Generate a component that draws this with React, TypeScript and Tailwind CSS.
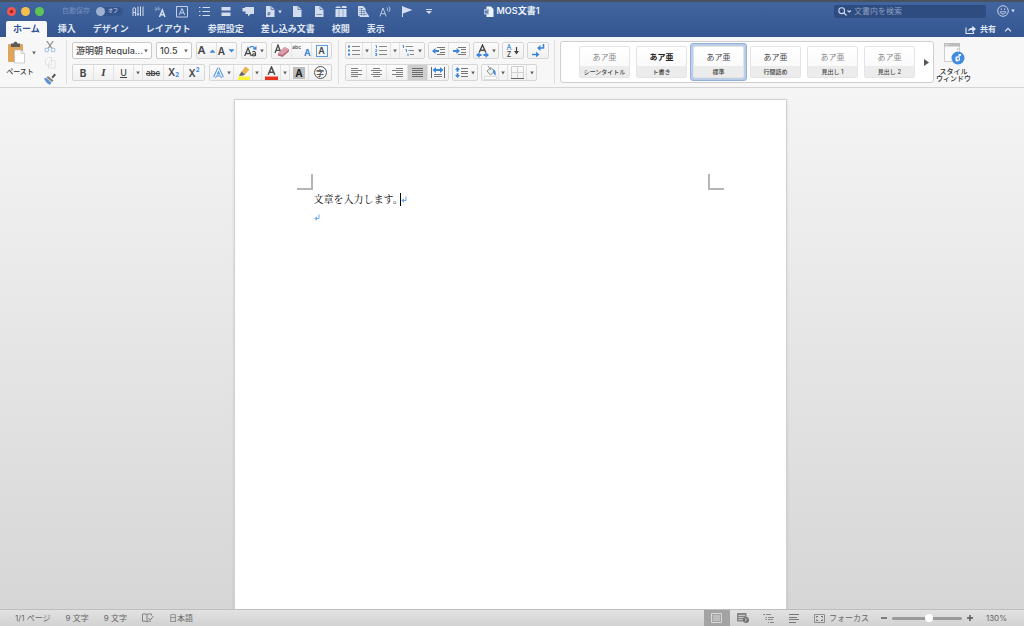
import { ReactNode } from "react";
import clsx from "clsx";

const BLUE = "#3b86d8";
const INK = "#4a4a4a";

function Icon({ w, h, label, children }: { w: number; h: number; label?: string; children: ReactNode }) {
  return (
    <svg width={w} height={h} viewBox={`0 0 ${w} ${h}`} fill="none" className="shrink-0" aria-hidden={!label} aria-label={label}>
      {children}
    </svg>
  );
}

function Caret({ className = "text-[#606060]" }: { className?: string }) {
  return (
    <svg width="4" height="4" viewBox="0 0 4 4" className={clsx("shrink-0", className)} aria-hidden>
      <path d="M.2.5h3.600L2 3.500z" fill="currentColor" />
    </svg>
  );
}

/* ---------- title bar icons ---------- */

const quickIcons: { label: string; icon: ReactNode; caret?: boolean }[] = [
  {
    label: "縦書き",
    icon: <path d="M1 11V4a1.3 1.3 0 0 1 2.6 0v7M1 7.5h2.600M6 1.500v8M8.500 1.500v9.500M11 1.500v9.500M4.900 8.500L6 10.500l1.100-2" stroke="currentColor" strokeWidth="1" />,
  },
  {
    label: "文字種の変換",
    icon: (
      <>
        <path d="M.8 3c1-.8 2-.3 2 .6v1.600M2.800 4C.3 3.800.3 5.500 1.600 5.300 2.300 5.200 2.800 4.700 2.800 4M4.200 1v4.200M4.200 3.500c1-1.300 2.300-.2 1.600 1-.4.8-1.200.8-1.600.3" stroke="currentColor" strokeWidth=".6" opacity=".7" />
        <path d="M5.500 12l2.800-7 2.700 7M6.500 9.800h3.600" stroke="currentColor" strokeWidth="1.500" />
      </>
    ),
  },
  {
    label: "囲み線",
    icon: (
      <>
        <path d="M.5 1.500h11v10.500H.5z" stroke="currentColor" strokeWidth=".9" />
        <path d="M3.300 10L6 3.500 8.700 10M4.200 7.900h3.600" stroke="currentColor" strokeWidth=".9" />
      </>
    ),
  },
  {
    label: "箇条書き",
    icon: <path d="M1 2.500h1.500M1 6.500h1.500M1 10.500h1.500M4.500 2.500H12M4.500 6.500H12M4.500 10.500H12" stroke="currentColor" strokeWidth="1" />,
  },
  {
    label: "区切り",
    icon: <path d="M1.500 2h9v3.500h-9zM1.500 7.500h9V11h-9z" fill="currentColor" />,
  },
  {
    label: "コメント",
    icon: <path d="M3 2h9v7H8.500L6 11.500V9H3.500V6.500H.5V3H3z" fill="currentColor" />,
  },
  {
    label: "新規文書",
    caret: true,
    icon: (
      <>
        <path d="M2 1h5l3.500 3.500V12H2z" fill="currentColor" />
        <path d="M7 1v3.500h3.500" stroke="#3d61a0" strokeWidth=".7" />
        <path d="M3.500 8h3M3.500 9.700h2.500M4.300 7v3.500M5.700 7v3" stroke="#3d61a0" strokeWidth=".6" />
      </>
    ),
  },
  {
    label: "空白の文書",
    icon: (
      <>
        <path d="M2 1h5l3.500 3.500V12H2z" fill="currentColor" />
        <path d="M7 1v3.500h3.500" stroke="#3d61a0" strokeWidth=".7" />
      </>
    ),
  },
  {
    label: "ページ",
    icon: (
      <>
        <path d="M2 1h5l3.500 3.500V12H2z" fill="currentColor" />
        <path d="M7 1v3.500h3.500M3.500 9.500h5.500" stroke="#3d61a0" strokeWidth=".6" />
      </>
    ),
  },
  {
    label: "テンプレート",
    icon: (
      <>
        <path d="M.5 4h11v8H.5zM0 3l1.500-1.500H5L6 3zM6.500 3l.5-2h4l1 2z" fill="currentColor" />
        <path d="M4 4v8M8 4v8" stroke="#3d61a0" strokeWidth=".4" />
      </>
    ),
  },
  {
    label: "相互参照",
    icon: (
      <>
        <path d="M1 1h5l2.500 2.500V6L12 11v1H3.500L1 10.500z" fill="currentColor" />
        <path d="M2.200 3.500h4M2.200 5.500h5.500M2.200 7.500h6M2.200 9.500H10M4.500 3v7.500M7 5.500v5.500" stroke="#3d61a0" strokeWidth=".5" />
      </>
    ),
  },
  {
    label: "読み上げ",
    icon: <path d="M.8 11.500l3.200-8.500 3.200 8.500M2 8.700h4M8 2.500c.8 1 .8 2.500 0 3.500M9.800 1.500c1.500 1.500 1.500 4 0 5.500" stroke="currentColor" strokeWidth=".8" />,
  },
  {
    label: "フラグ",
    icon: (
      <>
        <path d="M1.500 1v11" stroke="currentColor" strokeWidth="1" />
        <path d="M2 1.500l9.500 3.500L2 8.500z" fill="currentColor" />
      </>
    ),
  },
  {
    label: "カスタマイズ",
    icon: (
      <>
        <path d="M3 4.500h6" stroke="currentColor" strokeWidth="1" />
        <path d="M3 6h6L6 9z" fill="currentColor" />
      </>
    ),
  },
];

function TitleBar() {
  return (
    <div className="flex h-[18px] items-center">
      <div className="flex flex-1 items-center">
        <div className="flex gap-[5px] pl-[7px]">
          <button aria-label="閉じる" className="flex size-[9px] items-center justify-center rounded-full bg-[#f0554d]">
            <span className="size-[3px] rounded-full bg-[#8c1a12]" />
          </button>
          <button aria-label="しまう" className="size-[9px] rounded-full bg-[#f5bd4b]" />
          <button aria-label="拡大" className="size-[9px] rounded-full bg-[#5fc454]" />
        </div>
        <label className="ml-[18px] flex items-center gap-[6px] text-[7px] font-medium text-[#6e88b8]">
          自動保存
          <span className="relative flex h-[9px] w-[27px] items-center rounded-full bg-[#34548c]">
            <input type="checkbox" role="switch" className="absolute inset-0 size-full appearance-none" />
            <span className="size-[9px] rounded-full bg-[#9fb1d0]" />
            <span className="pl-[3px] text-[5px] font-bold text-[#9fb1d0]">オフ</span>
          </span>
        </label>
        <div className="ml-[9px] flex items-center gap-[10px] text-[#d3ddee]">
          {quickIcons.map((q) => (
            <button key={q.label} aria-label={q.label} className={clsx("relative", q.caret && "mr-[5px]")}>
              <Icon w={12} h={13}>
                {q.icon}
              </Icon>
              {q.caret && (
                <span className="absolute top-[5px] left-[14px]">
                  <Caret className="text-[#d3ddee]" />
                </span>
              )}
            </button>
          ))}
        </div>
      </div>
      <h1 className="flex items-center gap-[3px] pl-2 text-[9px] font-semibold text-[#eef2f9]">
        <Icon w={10} h={11}>
          <path d="M2.500.5h4.500L9.500 3v8h-7z" fill="#eef2f9" />
          <path d="M0 3h5v5.500H0z" fill="#aebfdd" />
          <path d="M1 4.200l.8 3 .7-2.500.8 2.500.7-3" stroke="#3d61a0" strokeWidth=".6" />
        </Icon>
        MOS文書1
      </h1>
      <div className="flex flex-1 items-center justify-end pr-[9px]">
        <label className="mr-[11px] flex h-[13px] w-[152px] items-center rounded-[2px] bg-[#2f4c80] pl-1">
          <Icon w={14} h={9} label="検索">
            <circle cx="3.700" cy="3.700" r="2.900" stroke="#d3ddee" strokeWidth="1.100" />
            <path d="M5.900 5.900l2.600 2.600M9.500 3.500L11.200 5l1.700-1.500" stroke="#d3ddee" strokeWidth="1.200" />
          </Icon>
          <input
            type="search"
            aria-label="文書内を検索"
            placeholder="文書内を検索"
            className="ml-[2px] min-w-0 flex-1 bg-transparent text-[8px] outline-none placeholder:text-[#8c9fc3]"
          />
        </label>
        <button aria-label="フィードバック" className="flex items-center gap-[2px]">
          <Icon w={12} h={12}>
            <circle cx="6" cy="6" r="5.300" stroke="#d3ddee" strokeWidth=".9" />
            <path d="M3 6.800c.6 3 5.400 3 6 0z" stroke="#d3ddee" strokeWidth=".8" />
            <path d="M4.300 3.500v1.500M7.700 3.500v1.500" stroke="#d3ddee" strokeWidth="1" />
          </Icon>
          <Caret className="text-[#d3ddee]" />
        </button>
      </div>
    </div>
  );
}

const tabs = ["挿入", "デザイン", "レイアウト", "参照設定", "差し込み文書", "校閲", "表示"];

function TabBar() {
  return (
    <div className="mt-px flex h-4 items-center justify-between pr-3 pl-[6px] text-[9px] font-semibold">
      <nav className="flex h-full items-center gap-[17px] text-[#dfe7f3]">
        <button className="-mr-[6px] h-full rounded-t-[2px] bg-[#f8f8f8] px-[7px] text-[#2f5496]">ホーム</button>
        {tabs.map((tab) => (
          <button key={tab}>{tab}</button>
        ))}
      </nav>
      <div className="flex items-center gap-[8px] text-[8px] text-[#dfe7f3]">
        <button className="flex items-center gap-[4px]">
          <Icon w={11} h={9}>
            <path d="M1 2.500v6h7.500v-2" stroke="currentColor" strokeWidth="1.100" />
            <path d="M3 6.500c.3-2.500 2-3.700 4.300-3.700V.8L11 4 7.300 7V5C5.300 5 4 5.300 3 6.500z" fill="currentColor" />
          </Icon>
          共有
        </button>
        <button aria-label="リボンを折りたたむ">
          <Icon w={8} h={5}>
            <path d="M1 4.300l3-3 3 3" stroke="currentColor" strokeWidth="1.200" />
          </Icon>
        </button>
      </div>
    </div>
  );
}

/* ---------- ribbon ---------- */

function Group({ children }: { children: ReactNode }) {
  return (
    <div className="flex h-[17px] divide-x divide-[#e2e2e2] rounded-[2px] border border-[#d6d6d6] bg-gradient-to-b from-[#fbfbfb] to-[#f1f1f1]">
      {children}
    </div>
  );
}

function Tool({ label, className = "w-5", active, children }: { label: string; className?: string; active?: boolean; children: ReactNode }) {
  return (
    <button
      aria-label={label}
      className={clsx("flex h-full shrink-0 items-center justify-center gap-[3px] text-[10px] leading-none text-[#444]", active && "bg-[#cfcfcf]", className)}
    >
      {children}
    </button>
  );
}

function DropCell({ label }: { label: string }) {
  return (
    <Tool label={label} className="w-[9px]">
      <Caret />
    </Tool>
  );
}

function Select({ label, value, className }: { label: string; value: string; className: string }) {
  return (
    <label className={clsx("relative flex h-[17px] items-center rounded-[2px] border border-[#c9c9c9] bg-white", className)}>
      <select aria-label={label} className="w-full appearance-none pl-[3px] text-[9px] leading-none font-medium text-[#444] outline-none">
        <option>{value}</option>
      </select>
      <span className="pointer-events-none absolute right-[3px]">
        <Caret />
      </span>
    </label>
  );
}

function Separator() {
  return <div className="my-[3px] w-px bg-[#dedede]" />;
}

function Clipboard() {
  return (
    <div className="flex w-[66px] pt-[4px]">
      <button className="flex w-[40px] flex-col items-center text-[7px] font-medium text-[#333]">
        <span className="flex items-center gap-[5px] pl-[3px]">
          <Icon w={20} h={23}>
            <rect x="1" y="3" width="15" height="18" rx="1" fill="#dfa65b" />
            <path d="M4 2.500h2.500C7 0 10 0 10.500 2.500H13V6H4z" fill="#5b5b5b" />
            <path d="M7.500 9h6.500l3.500 3.500V22h-10z" fill="#fff" stroke="#bbb" strokeWidth=".7" />
            <path d="M14 9v3.500h3.500" stroke="#bbb" strokeWidth=".7" />
          </Icon>
          <Caret />
        </span>
        <span className="mt-[3px]">ペースト</span>
      </button>
      <div className="flex flex-col gap-[4px] pl-[4px]">
        <button aria-label="切り取り">
          <Icon w={12} h={12}>
            <path d="M2.800 0L8 7.500M9.200 0L4 7.500" stroke="#8a8a8a" strokeWidth="1.200" />
            <circle cx="2.800" cy="9" r="1.900" stroke="#a9c5e8" strokeWidth="1.100" />
            <circle cx="9.200" cy="9" r="1.900" stroke="#a9c5e8" strokeWidth="1.100" />
          </Icon>
        </button>
        <button aria-label="コピー">
          <Icon w={12} h={12}>
            <path d="M1.500 3l2.500-2.500h3.500V8h-6zM4.500 6L7 3.500h4V11H4.500z" fill="#f8f8f8" stroke="#dcdcdc" strokeWidth=".8" />
          </Icon>
        </button>
        <button aria-label="書式のコピー">
          <Icon w={12} h={12}>
            <path d="M7.500 4L10.500.5 12 2 8.800 5.500z" fill="#555" />
            <path d="M4 3l5.500 4.500-1.500 1.500-5.500-4.500z" fill="#808080" />
            <path d="M0 5.500l2-.7L7.500 9.500 6 11.800C3.500 11 1.500 9 0 5.500z" fill="#5f93cf" />
          </Icon>
        </button>
      </div>
    </div>
  );
}

function FontTools() {
  return (
    <div className="flex flex-col gap-[5px] pt-[5px] pr-[6px] pl-[5px]">
      <div className="flex gap-1">
        <Select label="フォント" value="游明朝 Regula..." className="w-[80px]" />
        <Select label="フォントサイズ" value="10.5" className="w-[36px]" />
        <Group>
          <Tool label="フォントの拡大" className="w-[20px] gap-0 text-[11px] font-semibold">
            A
            <Icon w={7} h={4}>
              <path d="M.5 3.800h6L3.500.5z" fill={BLUE} />
            </Icon>
          </Tool>
          <Tool label="フォントの縮小" className="w-[19px] gap-0 font-semibold">
            A
            <Icon w={7} h={4}>
              <path d="M.5.300h6L3.500 3.600z" fill={BLUE} />
            </Icon>
          </Tool>
        </Group>
        <Group>
          <Tool label="文字種の変換" className="w-[24px]">
            <Icon w={13} h={12}>
              <path d="M.7 11L4 3l3.300 8M1.800 8.500h4.400" stroke={INK} strokeWidth="1.300" />
              <path d="M8.500 7c1-1 3-.7 3 .8V11M11.500 8.600c-4 0-4 2.300-1.700 2.300 1 0 1.700-.7 1.700-1.400" stroke={INK} strokeWidth="1.100" />
              <path d="M5.500 3C7 .8 9 .8 10.500 2.800" stroke={BLUE} strokeWidth="1.300" />
              <path d="M12.500 1v4L8.500 4z" fill={BLUE} />
            </Icon>
            <Caret />
          </Tool>
        </Group>
        <Group>
          <Tool label="書式のクリア">
            <Icon w={16} h={14}>
              <path d="M1 9l3-8 3 8M2.100 6.300h3.800" stroke={INK} strokeWidth="1.300" />
              <path d="M4 9.500L10.500 3l4.500 2.500V7.500L8.500 13 4 11.500z" fill="#b9687c" />
              <path d="M4 9.500L10.500 3 15 5.500l-6.500 5.500z" fill="#dc9dab" />
            </Icon>
          </Tool>
          <Tool label="ルビ" className="w-5 gap-0">
            <span className="self-start pt-px text-[5px] leading-[6px] font-medium">abc</span>
            <span className="self-end text-[9px] leading-[10px] font-bold text-[#3b86d8]">A</span>
          </Tool>
          <Tool label="囲み線" className="w-[19px]">
            <span className="flex size-3 items-center justify-center border border-[#5b9be0] text-[9px] font-semibold">A</span>
          </Tool>
        </Group>
      </div>
      <div className="flex gap-1">
        <Group>
          <Tool label="太字" className="w-[21px] font-bold">B</Tool>
          <Tool label="斜体" className="w-5 font-['Liberation_Serif'] text-[11px] font-bold italic">I</Tool>
          <Tool label="下線" className="w-5">
            <span className="border-b border-[#444] text-[9px] leading-[9px] font-medium">U</span>
          </Tool>
          <DropCell label="下線の種類" />
          <Tool label="取り消し線" className="w-[21px]">
            <span className="text-[8px] font-semibold line-through">abc</span>
          </Tool>
          <Tool label="下付き">
            <span className="pb-px font-semibold">X</span>
            <span className="-ml-[3px] self-end pb-[2px] text-[6px] font-bold text-[#3b86d8]">2</span>
          </Tool>
          <Tool label="上付き">
            <span className="pt-px font-semibold">X</span>
            <span className="-ml-[3px] self-start pt-[2px] text-[6px] font-bold text-[#3b86d8]">2</span>
          </Tool>
        </Group>
        <Group>
          <Tool label="文字の効果" className="w-6">
            <Icon w={11} h={12}>
              <path d="M1.500 10.500L5.500 2l4 8.500M3.200 8h4.600" stroke="#4a90dc" strokeWidth="3" strokeLinejoin="round" />
              <path d="M1.500 10.700L5.500 2l4 8.700M3.200 8h4.600" stroke="#f2f8ff" strokeWidth="1.200" />
            </Icon>
            <Caret />
          </Tool>
          <Tool label="蛍光ペン" className="w-[19px]">
            <Icon w={13} h={14}>
              <path d="M1 10.500h12V14H1z" fill="#fbf335" />
              <path d="M4.500 5.500L8.500.5l4 3L8 8.500z" fill="#e9b54c" />
              <path d="M4.500 5.500L8 8.500l-2.500 1.200H2z" fill="#666" />
            </Icon>
          </Tool>
          <DropCell label="蛍光ペンの色" />
          <Tool label="フォントの色" className="w-[19px]">
            <Icon w={13} h={14}>
              <path d="M3.200 8.800L6.500 1l3.300 7.800M4.400 6.300h4.200" stroke={INK} strokeWidth="1.500" />
              <path d="M0 10.500h13V14H0z" fill="#e8321f" />
            </Icon>
          </Tool>
          <DropCell label="フォントの色を選択" />
          <Tool label="文字の網かけ" className="w-[19px]">
            <span className="flex size-3 items-center justify-center bg-[#bdbdbd] font-bold text-[#222]">A</span>
          </Tool>
          <Tool label="囲い文字" className="w-[22px]">
            <span className="flex size-[13px] items-center justify-center rounded-full border border-[#555] text-[8px] font-medium">字</span>
          </Tool>
        </Group>
      </div>
    </div>
  );
}

function IndentIcon({ out }: { out?: boolean }) {
  return (
    <Icon w={13} h={10}>
      <path d="M5 1.500h8M8 3.500h5M8 6.500h5M5 8.500h8" stroke="#777" strokeWidth="1" />
      <path d={out ? "M0 5l3.500-3v2H7v2H3.500v2z" : "M7 5L3.500 2v2H0v2h3.500v2z"} fill={BLUE} />
    </Icon>
  );
}

function ParagraphTools() {
  return (
    <div className="flex flex-col gap-[5px] pt-[5px] pr-[5px] pl-[6px]">
      <div className="flex gap-[3px]">
        <Group>
          <Tool label="箇条書き" className="w-[17px]">
            <Icon w={12} h={11}>
              <path d="M0 1.500h2M0 5.500h2M0 9.500h2" stroke={BLUE} strokeWidth="2" />
              <path d="M4 1.500h8M4 5.500h8M4 9.500h8" stroke="#888" strokeWidth="1" />
            </Icon>
          </Tool>
          <DropCell label="行頭文字" />
          <Tool label="段落番号" className="w-[19px]">
            <Icon w={12} h={11}>
              <path d="M.5.500h1V3M.3 4.500h1.300v1L.5 6.700h1.500M.3 8.500h1.400v2H.3M.7 9.500h1" stroke={BLUE} strokeWidth=".9" />
              <path d="M4 1.500h8M4 5.500h8M4 9.500h8" stroke="#888" strokeWidth="1" />
            </Icon>
          </Tool>
          <DropCell label="番号書式" />
          <Tool label="アウトライン" className="w-[24px]">
            <Icon w={13} h={11}>
              <path d="M.5.500h1V3M3.500 4.500h1v2.500M6 8.500v2.500" stroke={BLUE} strokeWidth="1" />
              <path d="M3.500 1.500H11M6.500 5.500H12M8 9.500h4" stroke="#888" strokeWidth="1" />
            </Icon>
            <Caret />
          </Tool>
        </Group>
        <Group>
          <Tool label="インデントを減らす">
            <IndentIcon out />
          </Tool>
          <Tool label="インデントを増やす">
            <IndentIcon />
          </Tool>
        </Group>
        <Group>
          <Tool label="拡張書式" className="w-6">
            <Icon w={13} h={14}>
              <path d="M3.200 8.500L6.500 1l3.300 7.500M4.400 6.200h4.200" stroke={INK} strokeWidth="1.400" />
              <path d="M0 11l3.500-3v2h2v2h-2v2zM13 11L9.500 8v2h-2v2h2v2z" fill={BLUE} />
            </Icon>
            <Caret />
          </Tool>
        </Group>
        <Group>
          <Tool label="並べ替え">
            <span className="flex flex-col text-[7px] leading-[7px] font-medium">
              <span className="text-[#3b86d8]">A</span>
              <span>Z</span>
            </span>
            <Icon w={5} h={8}>
              <path d="M2.500 0v6" stroke="#444" strokeWidth="1.200" />
              <path d="M0 4h5L2.500 7.500z" fill="#444" />
            </Icon>
          </Tool>
        </Group>
        <Group>
          <Tool label="編集記号">
            <Icon w={13} h={13}>
              <path d="M11.500 0v4H8M0 10.500h5" stroke={BLUE} strokeWidth="1.600" />
              <path d="M8.500 1v6L5 4zM4 7.500v6l3.500-3z" fill={BLUE} />
            </Icon>
          </Tool>
        </Group>
      </div>
      <div className="flex gap-[3px]">
        <Group>
          <Tool label="左揃え" className="w-[21px]">
            <Icon w={11} h={9}>
              <path d="M0 .5h7M0 2.500h11M0 4.500h7M0 6.500h11M0 8.500h7" stroke="#808080" strokeWidth="1" />
            </Icon>
          </Tool>
          <Tool label="中央揃え">
            <Icon w={11} h={9}>
              <path d="M2 .5h7M0 2.500h11M2 4.500h7M0 6.500h11M2 8.500h7" stroke="#808080" strokeWidth="1" />
            </Icon>
          </Tool>
          <Tool label="右揃え" className="w-[21px]">
            <Icon w={11} h={9}>
              <path d="M4 .5h7M0 2.500h11M4 4.500h7M0 6.500h11M4 8.500h7" stroke="#808080" strokeWidth="1" />
            </Icon>
          </Tool>
          <Tool label="両端揃え" active>
            <Icon w={11} h={9}>
              <path d="M0 .5h11M0 2.500h11M0 4.500h11M0 6.500h11M0 8.500h11" stroke="#6a6a6a" strokeWidth="1" />
            </Icon>
          </Tool>
          <Tool label="均等割り付け">
            <Icon w={14} h={11}>
              <path d="M.5 0v11M13.500 0v11" stroke="#666" strokeWidth="1" />
              <path d="M1.500 3L5 0v2h4V0l3.500 3L9 6V4H5v2z" fill={BLUE} />
              <path d="M3 7.500h8M3 9.500h8" stroke="#777" strokeWidth="1" />
            </Icon>
          </Tool>
        </Group>
        <Group>
          <Tool label="行間" className="w-6">
            <Icon w={13} h={11}>
              <path d="M2.500 0L5 3H3.500v1.800h-2V3H0zM2.500 11L5 8H3.500V6.200h-2V8H0z" fill={BLUE} />
              <path d="M6 1.500h7M6 4.500h7M6 6.500h7M6 9.500h7" stroke="#777" strokeWidth="1" />
            </Icon>
            <Caret />
          </Tool>
        </Group>
        <Group>
          <Tool label="塗りつぶし" className="w-[17px]">
            <Icon w={13} h={14}>
              <path d="M3 5l4-3.500 3.500 4L6.500 9z" fill="#eee" stroke="#777" strokeWidth=".8" />
              <path d="M4 0l3 4" stroke="#777" strokeWidth=".8" />
              <path d="M9 3.500c2.500 0 3 3 2.500 6-1.500-1-2.500-2.500-2.500-6z" fill={BLUE} />
              <path d="M.5 10.500h12v3H.5z" fill="#fff" stroke="#ccc" strokeWidth=".6" />
            </Icon>
          </Tool>
          <DropCell label="塗りつぶしの色" />
          <Tool label="罫線" className="w-[19px]">
            <Icon w={13} h={13}>
              <path d="M.5 12V.5h12V12M6.500.5V12M.5 6.500h12" stroke="#d0d0d0" strokeWidth="1" />
              <path d="M0 12.500h13" stroke="#666" strokeWidth="1" />
            </Icon>
          </Tool>
          <DropCell label="罫線の種類" />
        </Group>
      </div>
    </div>
  );
}

const styles = [
  { name: "シーンタイトル", sample: "text-[#888]" },
  { name: "ト書き", sample: "text-[#222] font-bold" },
  { name: "標準", sample: "text-[#444]", selected: true },
  { name: "行間詰め", sample: "text-[#444]" },
  { name: "見出し 1", sample: "text-[#888]" },
  { name: "見出し 2", sample: "text-[#888]" },
];

function StyleGallery() {
  return (
    <div className="mt-1 ml-[5px] flex h-[42px] items-center rounded-[3px] border border-[#cfcfcf] bg-white pr-[4px] pl-[15px]">
      {styles.map((style) => (
        <button
          key={style.name}
          className={clsx("h-[38px] w-[57px] rounded-[3px] border p-[2px]", style.selected ? "border-[#93afdb] bg-[#bccde8]" : "border-transparent")}
        >
          <span className="flex h-full flex-col overflow-hidden rounded-[2px] border border-[#e4e4e4] bg-gradient-to-b from-white to-[#f7f7f7]">
            <span className={clsx("flex flex-1 items-center justify-center text-[8px] leading-none", style.sample)}>あア亜</span>
            <span className="bg-[#ececec] text-center text-[6px] leading-[11px] font-medium whitespace-nowrap text-[#444]">{style.name}</span>
          </span>
        </button>
      ))}
      <button aria-label="その他のスタイル" className="ml-[6px]">
        <Icon w={5} h={7}>
          <path d="M0 0v7l5-3.500z" fill="#555" />
        </Icon>
      </button>
    </div>
  );
}

function StylePaneButton() {
  return (
    <button className="ml-[2px] flex flex-col items-center pt-[6px] text-[7px] leading-[7px] font-medium text-[#333]">
      <Icon w={22} h={22}>
        <path d="M1.500.5h15v18h-15z" fill="#fbfbfb" stroke="#c4c4c4" strokeWidth=".8" />
        <path d="M1 0h16v3.500H1z" fill="#bcbcbc" />
        <path d="M2.500 1.800h1M4.500 1.800h1" stroke="#fff" strokeWidth="1" />
        <path d="M14 6h1.500" stroke="#999" strokeWidth="1" />
        <circle cx="15" cy="15" r="6.500" fill="#3f8ce0" />
        <path d="M15.500 11h2.500v1.800h-1.300v2h-1.200zM13 13.500h3v1.300h-1.500c-.8 0-.8 1.700 0 1.700h1.500V15h1v2.500h-1.500c-.3 1.500-2.800 1.300-3-.3-.1-1.200-.3-3 .5-3.700z" fill="#fff" />
      </Icon>
      <span className="mt-[3px]">スタイル</span>
      <span>ウィンドウ</span>
    </button>
  );
}

function Ribbon() {
  return (
    <div className="flex h-[51px] shrink-0 items-stretch border-b border-[#d5d5d5] bg-[#f7f7f7]">
      <Clipboard />
      <Separator />
      <FontTools />
      <Separator />
      <ParagraphTools />
      <Separator />
      <div className="flex items-start">
        <StyleGallery />
        <StylePaneButton />
      </div>
    </div>
  );
}

/* ---------- document ---------- */

function ReturnMark() {
  return (
    <Icon w={6} h={7}>
      <path d="M5 .5v4H2.500" stroke="#6aaaf0" strokeWidth="1" />
      <path d="M3 2.300v4.400L.3 4.500z" fill="#6aaaf0" />
    </Icon>
  );
}

function Document() {
  return (
    <main className="min-h-0 flex-1 overflow-hidden bg-gradient-to-b from-[#f5f5f5] to-[#d6d6d6] pt-[11px] pr-1">
      <article className="mx-auto h-full w-[553px] border border-b-0 border-[#d0d0d0] bg-white px-[62px] pt-[74px] shadow-sm">
        <div className="flex justify-between">
          <span className="size-4 border-r-2 border-b-2 border-[#b5b5b5]" />
          <span className="size-4 border-b-2 border-l-2 border-[#b5b5b5]" />
        </div>
        <div className="px-[17px] font-['Noto_Serif_CJK_JP','Noto_Sans_CJK_JP',serif] text-[10px] leading-[18px] text-black">
          <p className="flex items-center">
            文章を入力します。
            <span className="-ml-[3px] h-[13px] w-px bg-black" />
            <ReturnMark />
          </p>
          <p className="flex h-[18px] items-center">
            <ReturnMark />
          </p>
        </div>
      </article>
    </main>
  );
}

/* ---------- status bar ---------- */

function StatusBar() {
  return (
    <footer className="flex h-[17px] shrink-0 items-center justify-between border-t border-[#bdbdbd] bg-gradient-to-b from-[#e2e2e2] to-[#d2d2d2] text-[8px] text-[#666]">
      <div className="flex items-center gap-[15px] pl-[15px]">
        <span>1/1 ページ</span>
        <span>9 文字</span>
        <span>9 文字</span>
        <button aria-label="文章校正">
          <Icon w={12} h={10}>
            <path d="M5 8.500V1.500C4 .8 2 .8.500 1v7.300c1.500-.3 3.500-.3 4.500.7 1-.8 2-1 4-.8M5 1.500C6 .8 8 .8 9.500 1v1.500M6.500 5l1.700 2L11.500 3" stroke="#777" strokeWidth=".9" />
          </Icon>
        </button>
        <button>日本語</button>
      </div>
      <div className="flex h-full items-center pr-[17px]">
        <button aria-label="印刷レイアウト" className="flex h-full w-[26px] items-center justify-center bg-[#a3a3a3]">
          <Icon w={11} h={10}>
            <path d="M.5.500h10v9H.5zM2 3h7M2 5h7M2 7h7" stroke="#dedede" strokeWidth=".9" />
          </Icon>
        </button>
        <button aria-label="Web レイアウト" className="flex w-[26px] justify-center">
          <Icon w={12} h={10}>
            <path d="M0 0h9.500v4.500H7L6 8.500H0z" fill="#858585" />
            <path d="M1.500 2.500h6.500M1.500 4.500h5M1.500 6.500h4" stroke="#ddd" strokeWidth=".8" />
            <circle cx="9" cy="7" r="3" fill="#6e6e6e" />
            <path d="M8 5l1 2-1 2M10 5.500l-.5 1.500" stroke="#ddd" strokeWidth=".6" />
          </Icon>
        </button>
        <button aria-label="アウトライン" className="flex w-[26px] justify-center">
          <Icon w={11} h={9}>
            <path d="M0 .5h2M3 .5h5M2.500 3.500H4M5 3.500h6M2.500 5.500H4M5 5.500h5M5 8.500h1M7 8.500h4" stroke="#888" strokeWidth="1" />
          </Icon>
        </button>
        <button aria-label="下書き" className="flex w-[24px] justify-center">
          <Icon w={10} h={9}>
            <path d="M0 .5h10M0 3.500h8M0 5.500h10M0 8.500h7" stroke="#777" strokeWidth="1" />
          </Icon>
        </button>
        <button className="ml-[8px] flex items-center gap-[4px]">
          <Icon w={11} h={9}>
            <path d="M.5.500h10v8H.5z" stroke="#8f8f8f" strokeWidth="1" />
            <path d="M2.500 3.500v-1h1.500M7 2.500h1.500v1M8.500 5.500v1H7M4 6.500H2.500v-1" stroke="#666" strokeWidth="1" />
          </Icon>
          フォーカス
        </button>
        <button aria-label="縮小" className="ml-[12px]">
          <Icon w={6} h={6}>
            <path d="M0 3h6" stroke="#555" strokeWidth="1.400" />
          </Icon>
        </button>
        <input
          type="range"
          aria-label="ズーム"
          min={0}
          max={100}
          defaultValue={54}
          className="mx-[5px] h-[3px] w-[70px] appearance-none rounded-full bg-[#9a9a9a] [&::-webkit-slider-thumb]:size-2 [&::-webkit-slider-thumb]:appearance-none [&::-webkit-slider-thumb]:rounded-full [&::-webkit-slider-thumb]:bg-white"
        />
        <button aria-label="拡大表示">
          <Icon w={6} h={6}>
            <path d="M0 3h6M3 0v6" stroke="#555" strokeWidth="1.400" />
          </Icon>
        </button>
        <button className="ml-[13px]">130%</button>
      </div>
    </footer>
  );
}

export default function App() {
  return (
    <div className="flex h-screen flex-col overflow-hidden font-['Inter','Noto_Sans_CJK_JP',sans-serif]">
      <header className="shrink-0 border-t-2 border-[#4a5260] bg-gradient-to-b from-[#41659f] to-[#345590]">
        <TitleBar />
        <TabBar />
      </header>
      <Ribbon />
      <Document />
      <StatusBar />
    </div>
  );
}
